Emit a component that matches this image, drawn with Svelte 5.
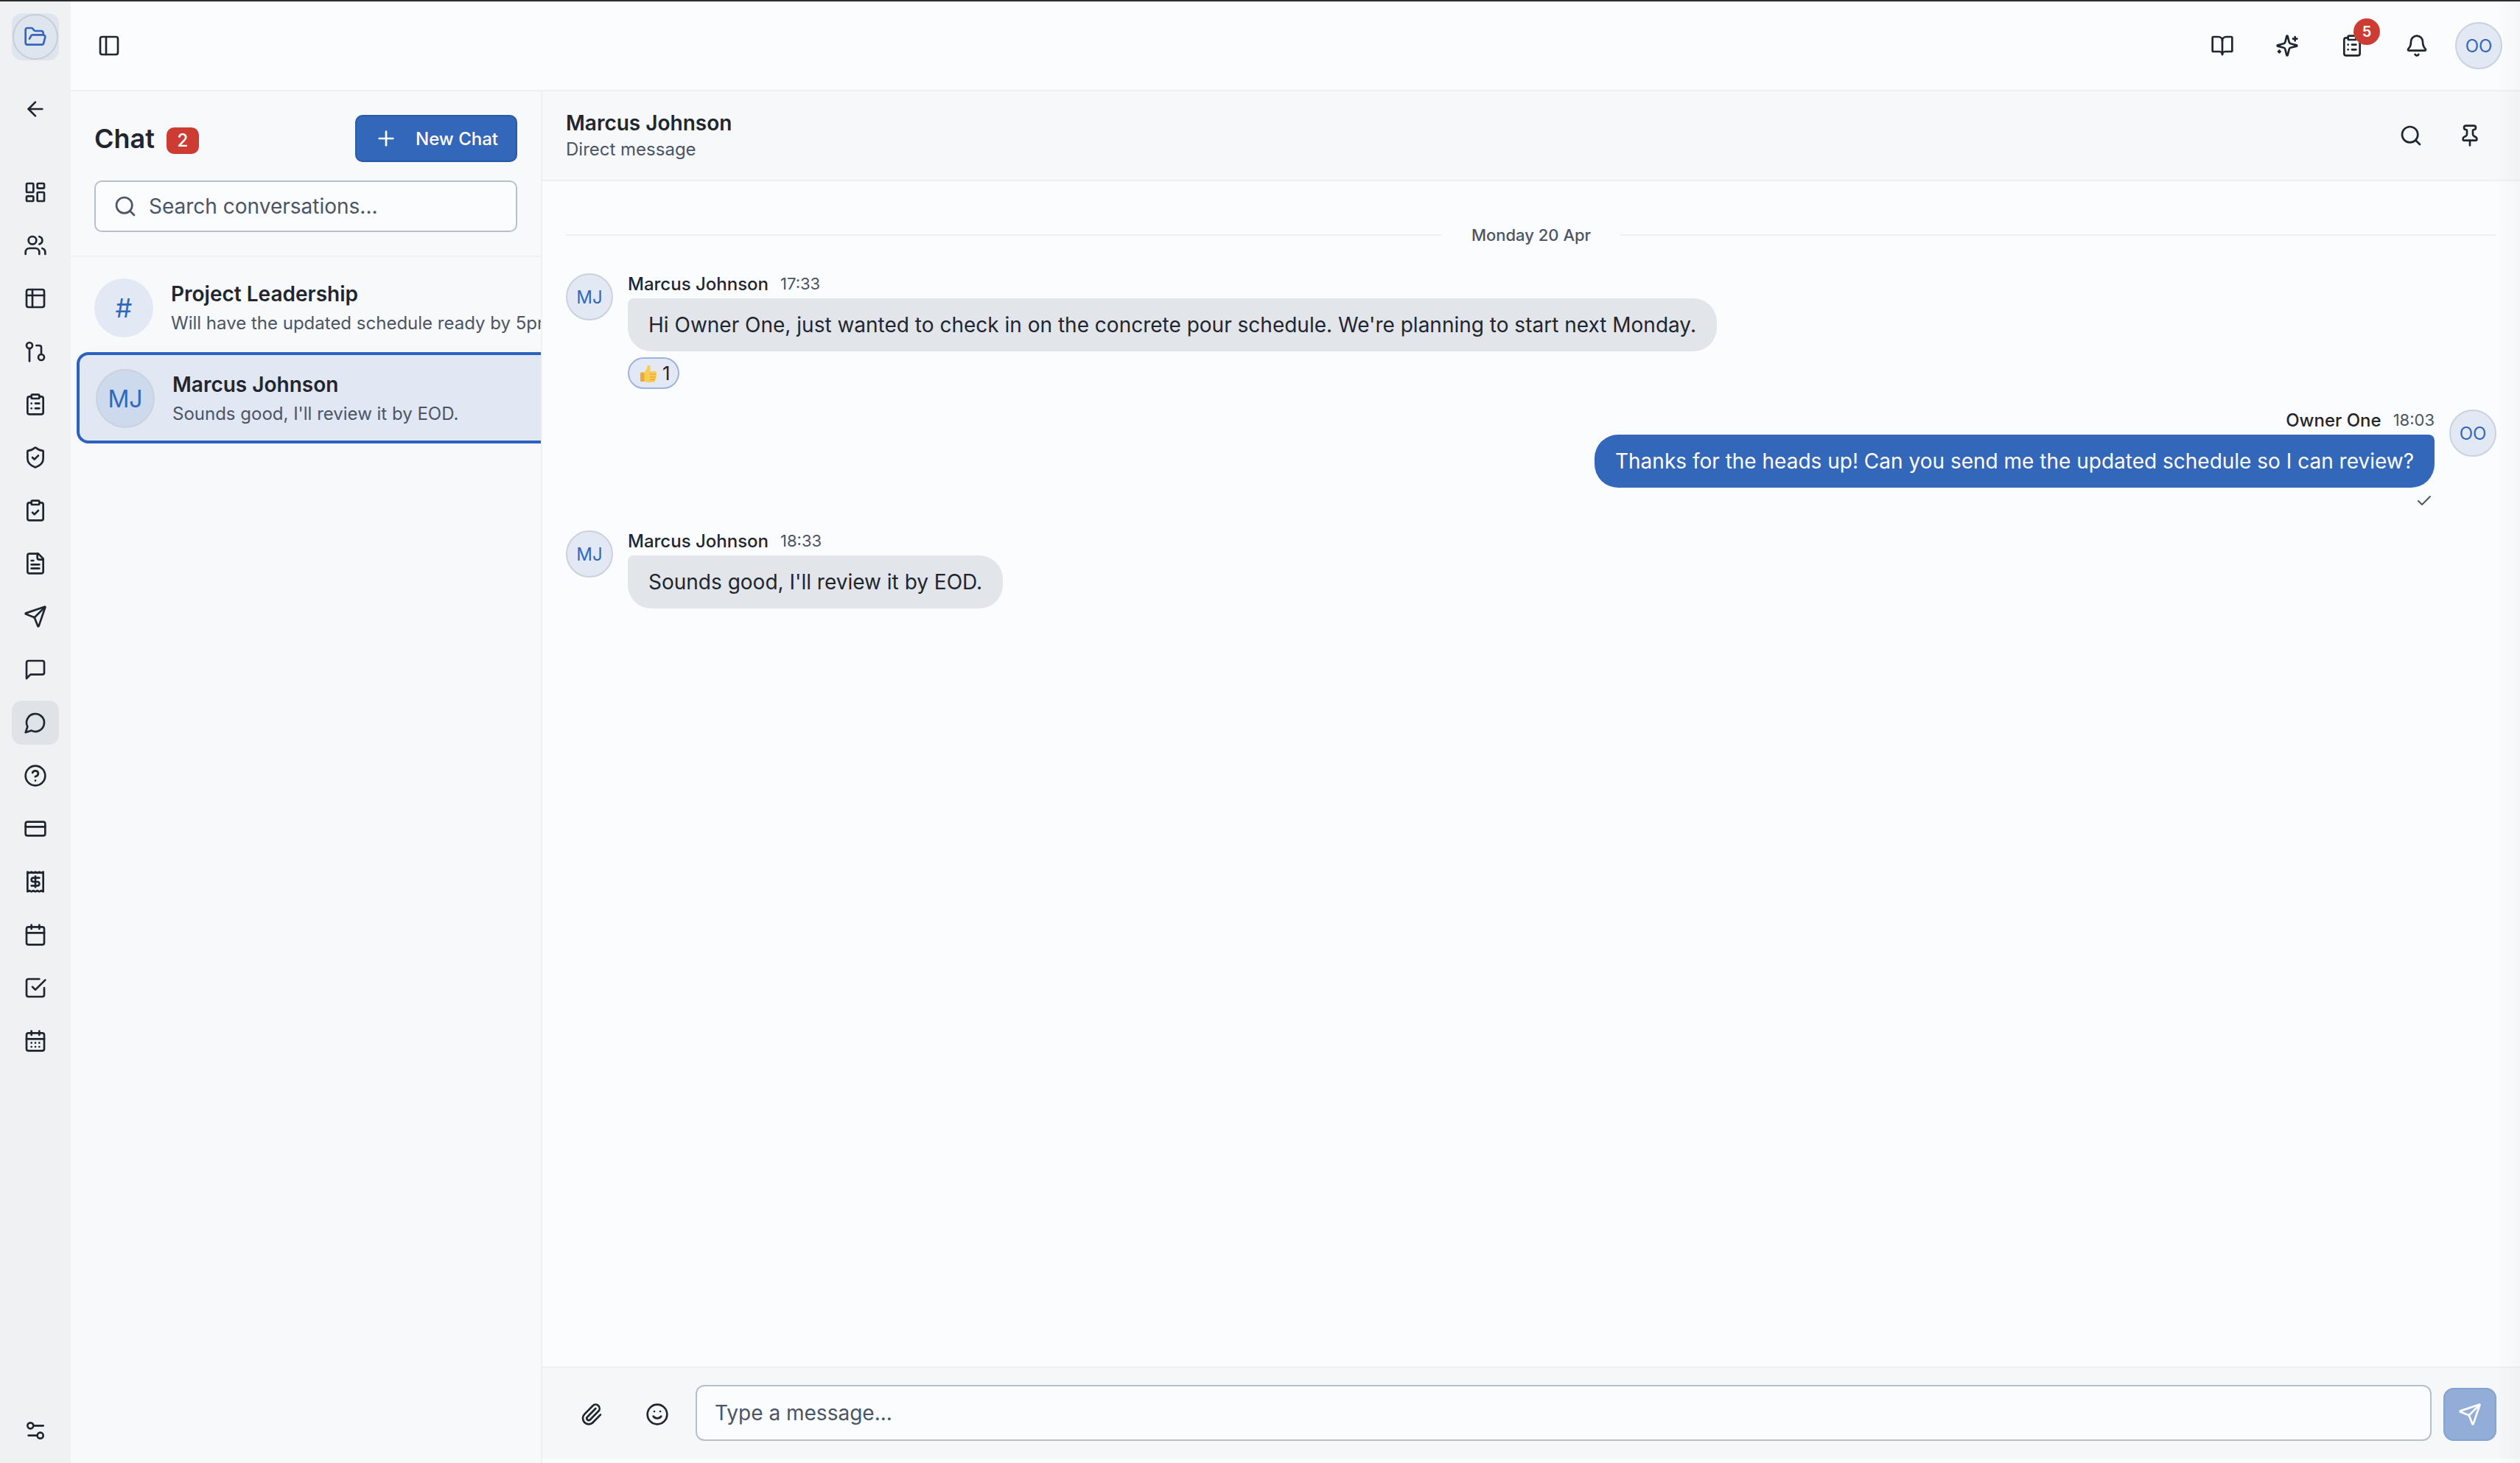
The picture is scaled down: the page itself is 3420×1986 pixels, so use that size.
<script>
  // Icon bodies are lucide-style path lists on a 24 box
  const I = {
    folder: ['m6 14 1.5-2.9A2 2 0 0 1 9.24 10H20a2 2 0 0 1 1.94 2.5l-1.54 6a2 2 0 0 1-1.95 1.5H4a2 2 0 0 1-2-2V5a2 2 0 0 1 2-2h3.9a2 2 0 0 1 1.69.9l.81 1.2a2 2 0 0 0 1.67.9H18a2 2 0 0 1 2 2v2'],
    panel: ['M5 3h14a2 2 0 0 1 2 2v14a2 2 0 0 1-2 2H5a2 2 0 0 1-2-2V5a2 2 0 0 1 2-2z', 'M9 3v18'],
    back: ['m12 19-7-7 7-7', 'M19 12H5'],
    dash: ['M4 3h5a1 1 0 0 1 1 1v7a1 1 0 0 1-1 1H4a1 1 0 0 1-1-1V4a1 1 0 0 1 1-1z', 'M15 3h5a1 1 0 0 1 1 1v3a1 1 0 0 1-1 1h-5a1 1 0 0 1-1-1V4a1 1 0 0 1 1-1z', 'M15 12h5a1 1 0 0 1 1 1v7a1 1 0 0 1-1 1h-5a1 1 0 0 1-1-1v-7a1 1 0 0 1 1-1z', 'M4 16h5a1 1 0 0 1 1 1v3a1 1 0 0 1-1 1H4a1 1 0 0 1-1-1v-3a1 1 0 0 1 1-1z'],
    users: ['M16 21v-2a4 4 0 0 0-4-4H6a4 4 0 0 0-4 4v2', 'M13 7a4 4 0 1 1-8 0 4 4 0 0 1 8 0z', 'M22 21v-2a4 4 0 0 0-3-3.87', 'M16 3.13a4 4 0 0 1 0 7.75'],
    table: ['M5 3h14a2 2 0 0 1 2 2v14a2 2 0 0 1-2 2H5a2 2 0 0 1-2-2V5a2 2 0 0 1 2-2z', 'M3 9h18', 'M9 3v18'],
    branch: ['M9 6a3 3 0 1 1-6 0 3 3 0 0 1 6 0z', 'M6 9v13', 'M21 18a3 3 0 1 1-6 0 3 3 0 0 1 6 0z', 'M13 6h3a2 2 0 0 1 2 2v7'],
    cliplist: ['M9 2h6a1 1 0 0 1 1 1v2a1 1 0 0 1-1 1H9a1 1 0 0 1-1-1V3a1 1 0 0 1 1-1z', 'M16 4h2a2 2 0 0 1 2 2v14a2 2 0 0 1-2 2H6a2 2 0 0 1-2-2V6a2 2 0 0 1 2-2h2', 'M12 11h4', 'M12 16h4', 'M8 11h.01', 'M8 16h.01'],
    shield: ['M20 13c0 5-3.5 7.5-7.66 8.95a1 1 0 0 1-.67-.01C7.5 20.5 4 18 4 13V6a1 1 0 0 1 1-1c2 0 4.5-1.2 6.24-2.72a1.17 1.17 0 0 1 1.52 0C14.51 3.81 17 5 19 5a1 1 0 0 1 1 1z', 'm9 12 2 2 4-4'],
    clipcheck: ['M9 2h6a1 1 0 0 1 1 1v2a1 1 0 0 1-1 1H9a1 1 0 0 1-1-1V3a1 1 0 0 1 1-1z', 'M16 4h2a2 2 0 0 1 2 2v14a2 2 0 0 1-2 2H6a2 2 0 0 1-2-2V6a2 2 0 0 1 2-2h2', 'm9 14 2 2 4-4'],
    file: ['M15 2H6a2 2 0 0 0-2 2v16a2 2 0 0 0 2 2h12a2 2 0 0 0 2-2V7Z', 'M14 2v4a2 2 0 0 0 2 2h4', 'M10 9H8', 'M16 13H8', 'M16 17H8'],
    send: ['M14.536 21.686a.5.5 0 0 0 .937-.024l6.5-19a.496.496 0 0 0-.635-.635l-19 6.5a.5.5 0 0 0-.024.937l7.93 3.18a2 2 0 0 1 1.112 1.11z', 'm21.854 2.147-10.94 10.939'],
    square: ['M21 15a2 2 0 0 1-2 2H7l-4 4V5a2 2 0 0 1 2-2h14a2 2 0 0 1 2 2z'],
    circle: ['M7.9 20A9 9 0 1 0 4 16.1L2 22Z'],
    help: ['M22 12a10 10 0 1 1-20 0 10 10 0 0 1 20 0z', 'M9.09 9a3 3 0 0 1 5.83 1c0 2-3 3-3 3', 'M12 17h.01'],
    card: ['M4 5h16a2 2 0 0 1 2 2v10a2 2 0 0 1-2 2H4a2 2 0 0 1-2-2V7a2 2 0 0 1 2-2z', 'M2 10h20'],
    receipt: ['M4 2v20l2-1 2 1 2-1 2 1 2-1 2 1 2-1 2 1V2l-2 1-2-1-2 1-2-1-2 1-2-1-2 1Z', 'M16 8h-6a2 2 0 1 0 0 4h4a2 2 0 1 1 0 4H8', 'M12 17.5v-11'],
    cal: ['M8 2v4', 'M16 2v4', 'M5 4h14a2 2 0 0 1 2 2v14a2 2 0 0 1-2 2H5a2 2 0 0 1-2-2V6a2 2 0 0 1 2-2z', 'M3 10h18'],
    task: ['m9 11 3 3L22 4', 'M21 12v7a2 2 0 0 1-2 2H5a2 2 0 0 1-2-2V5a2 2 0 0 1 2-2h11'],
    days: ['M8 2v4', 'M16 2v4', 'M5 4h14a2 2 0 0 1 2 2v14a2 2 0 0 1-2 2H5a2 2 0 0 1-2-2V6a2 2 0 0 1 2-2z', 'M3 10h18', 'M8 14h.01', 'M12 14h.01', 'M16 14h.01', 'M8 18h.01', 'M12 18h.01', 'M16 18h.01'],
    tune: ['M20 7h-9', 'M14 17H5', 'M20 17a3 3 0 1 1-6 0 3 3 0 0 1 6 0z', 'M10 7a3 3 0 1 1-6 0 3 3 0 0 1 6 0z'],
    book: ['M12 7v14', 'M3 18a1 1 0 0 1-1-1V4a1 1 0 0 1 1-1h5a4 4 0 0 1 4 4 4 4 0 0 1 4-4h5a1 1 0 0 1 1 1v13a1 1 0 0 1-1 1h-6a3 3 0 0 0-3 3 3 3 0 0 0-3-3z'],
    spark: ['M9.937 15.5A2 2 0 0 0 8.5 14.063l-6.135-1.582a.5.5 0 0 1 0-.962L8.5 9.936A2 2 0 0 0 9.937 8.5l1.582-6.135a.5.5 0 0 1 .963 0L14.063 8.5A2 2 0 0 0 15.5 9.937l6.135 1.581a.5.5 0 0 1 0 .964L15.5 14.063a2 2 0 0 0-1.437 1.437l-1.582 6.135a.5.5 0 0 1-.963 0z', 'M20 3v4', 'M22 5h-4', 'M4 17v2', 'M5 18H3'],
    bell: ['M10.268 21a2 2 0 0 0 3.464 0', 'M3.262 15.326A1 1 0 0 0 4 17h16a1 1 0 0 0 .74-1.673C19.41 13.956 18 12.499 18 8A6 6 0 0 0 6 8c0 4.499-1.411 5.956-2.738 7.326'],
    search: ['m21 21-4.34-4.34', 'M19 11a8 8 0 1 1-16 0 8 8 0 0 1 16 0z'],
    pin: ['M12 17v5', 'M9 10.76a2 2 0 0 1-1.11 1.79l-1.78.9A2 2 0 0 0 5 15.24V16a1 1 0 0 0 1 1h12a1 1 0 0 0 1-1v-.76a2 2 0 0 0-1.11-1.79l-1.78-.9A2 2 0 0 1 15 10.76V7a1 1 0 0 1 1-1 2 2 0 0 0 0-4H8a2 2 0 0 0 0 4 1 1 0 0 1 1 1z'],
    clip: ['M13.234 20.252 21 12.3', 'm16 6-8.414 8.586a2 2 0 0 0 0 2.828 2 2 0 0 0 2.828 0l8.414-8.586a4 4 0 0 0 0-5.656 4 4 0 0 0-5.656 0l-8.415 8.585a6 6 0 1 0 8.486 8.486'],
    smile: ['M22 12a10 10 0 1 1-20 0 10 10 0 0 1 20 0z', 'M8 14s1.5 2 4 2 4-2 4-2', 'M9 9h.01', 'M15 9h.01'],
    plus: ['M5 12h14', 'M12 5v14'],
    check: ['M20 6 9 17l-5-5'],
  }

  const nav = ['dash', 'users', 'table', 'branch', 'cliplist', 'shield', 'clipcheck', 'file', 'send', 'square', 'circle', 'help', 'card', 'receipt', 'cal', 'task', 'days']
</script>

{#snippet icon(name, size = 32)}
  <svg class="ic" width={size} height={size} viewBox="0 0 24 24" fill="none" stroke="currentColor" stroke-width="2" stroke-linecap="round" stroke-linejoin="round">
    {#each I[name] as d}<path {d} />{/each}
  </svg>
{/snippet}

<div class="app">
  <aside class="rail">
    <div class="rail-top">
      <button class="brand"><span class="ring">{@render icon('folder')}</span></button>
    </div>
    <button class="nav back">{@render icon('back')}</button>
    <nav class="nav-list">
      {#each nav as n}
        <button class="nav" class:on={n === 'circle'}>{@render icon(n)}</button>
      {/each}
    </nav>
    <button class="nav tune">{@render icon('tune')}</button>
  </aside>

  <div class="page">
    <header class="topbar">
      <button class="tb panel-btn">{@render icon('panel')}</button>
      <div class="tools">
        <button class="tb">{@render icon('book')}</button>
        <button class="tb">{@render icon('spark')}</button>
        <button class="tb">{@render icon('cliplist')}<span class="count">5</span></button>
        <button class="tb">{@render icon('bell')}</button>
        <span class="avatar top-av">OO</span>
      </div>
    </header>

    <div class="body">
      <section class="list">
        <div class="list-head">
          <div class="title-row">
            <h1>Chat <span class="unread">2</span></h1>
            <button class="new">{@render icon('plus')}<span>New Chat</span></button>
          </div>
          <div class="search">{@render icon('search')}<span>Search conversations...</span></div>
        </div>
        <div class="convs">
          <div class="conv">
            <span class="avatar big hash">#</span>
            <div class="conv-text">
              <div class="conv-name">Project Leadership</div>
              <div class="conv-last">Will have the updated schedule ready by 5pm today.</div>
            </div>
          </div>
          <div class="conv sel">
            <span class="avatar big">MJ</span>
            <div class="conv-text">
              <div class="conv-name">Marcus Johnson</div>
              <div class="conv-last">Sounds good, I'll review it by EOD.</div>
            </div>
          </div>
        </div>
      </section>

      <main class="chat">
        <div class="chat-head">
          <div>
            <div class="chat-name">Marcus Johnson</div>
            <div class="chat-sub">Direct message</div>
          </div>
          <div class="chat-tools">
            <button class="tb">{@render icon('search')}</button>
            <button class="tb">{@render icon('pin')}</button>
          </div>
        </div>

        <div class="msgs">
          <div class="date"><span>Monday 20 Apr</span></div>

          <div class="msg">
            <span class="avatar">MJ</span>
            <div class="col">
              <div class="meta"><b>Marcus Johnson</b><time>17:33</time></div>
              <div class="bubble">Hi Owner One, just wanted to check in on the concrete pour schedule. We're planning to start next Monday.</div>
              <div class="react">
                <!-- thumbs-up emoji, drawn since no emoji font is installed -->
                <svg width="24" height="26" viewBox="0 0 24 26">
                  <path d="M6 12 C8 9 10 7 10.500 3 C10.700 .8 14 .8 14.500 3.500 C15 6 14.500 8 14 10 L21 10 C23.500 10 23.500 13 22.500 14 C23.500 15 23.500 17 22 18 C23 19.500 22.500 21 21 21.500 C21.500 23.500 20.500 25 18.500 25 L10 25 C8 25 7 24 6 23.500 Z" fill="#f8cc55" />
                  <rect x="1" y="11.500" width="5.500" height="12.500" rx="1.500" fill="#f0a92e" />
                  <path d="M14 14h8M14 18h8M14 21.500h7" stroke="#e09a2a" stroke-width="1" fill="none" />
                </svg>
                <span>1</span>
              </div>
            </div>
          </div>

          <div class="msg mine">
            <div class="col">
              <div class="meta"><b>Owner One</b><time>18:03</time></div>
              <div class="bubble">Thanks for the heads up! Can you send me the updated schedule so I can review?</div>
              <div class="read">{@render icon('check', 24)}</div>
            </div>
            <span class="avatar">OO</span>
          </div>

          <div class="msg">
            <span class="avatar">MJ</span>
            <div class="col">
              <div class="meta"><b>Marcus Johnson</b><time>18:33</time></div>
              <div class="bubble">Sounds good, I'll review it by EOD.</div>
            </div>
          </div>
        </div>

        <div class="composer">
          <button class="tb att">{@render icon('clip')}</button>
          <button class="tb att">{@render icon('smile')}</button>
          <div class="input">Type a message...</div>
          <button class="sendbtn">{@render icon('send')}</button>
        </div>
      </main>
    </div>
  </div>
  <div class="edge"></div>
</div>

<style>
  :global(body) { margin: 0; background: #fbfcfe; }
  button { border: 0; background: none; padding: 0; color: inherit; font: inherit; display: inline-flex; align-items: center; justify-content: center; }
  .ic { display: block; flex: none; }

  .app { position: relative; display: flex; width: 3420px; height: 1986px; box-sizing: border-box; border-top: 2px solid #2b2d31; overflow: hidden; font-family: Inter, "Noto Sans", sans-serif; color: #1f2630; }
  .edge { position: absolute; top: 0; right: 0; bottom: 0; width: 32px; background: linear-gradient(to right, rgba(0, 0, 0, 0), rgba(0, 0, 0, .025)); pointer-events: none; }

  .rail { width: 96px; flex: none; background: #f0f1f3; display: flex; flex-direction: column; align-items: center; }
  .rail-top { width: 100%; height: 97px; padding-top: 16px; box-sizing: border-box; border-bottom: 2px solid #eef0f2; display: flex; justify-content: center; }
  .brand { width: 64px; height: 64px; border-radius: 14px; background: #dfe5ef; color: #3367ba; }
  .ring { width: 62px; height: 62px; border-radius: 50%; border: 2px solid #c7ced9; box-sizing: border-box; display: flex; align-items: center; justify-content: center; }
  .nav { width: 64px; height: 56px; border-radius: 14px; }
  .back { margin-top: 21px; }
  .nav-list { display: flex; flex-direction: column; gap: 16px; margin-top: 57px; }
  .nav.on { background: #dfe2e7; height: 60px; margin: -2px 0; }
  .tune { margin-top: auto; margin-bottom: 16px; }

  .page { flex: 1; min-width: 0; display: flex; flex-direction: column; }
  .topbar { height: 122px; flex: none; display: flex; align-items: center; justify-content: space-between; box-sizing: border-box; background: #fbfcfe; border-bottom: 2px solid #eef0f2; padding: 0 24px 0 36px; }
  .tb { width: 48px; height: 48px; position: relative; }
  .panel-btn { width: 32px; }
  .tools { display: flex; align-items: center; gap: 40px; }
  .tools .tb { width: 48px; }
  .count { position: absolute; top: -13px; left: 26px; width: 36px; height: 36px; border-radius: 50%; background: #cd3c32; color: #fff; font-size: 20px; font-weight: 600; display: flex; align-items: center; justify-content: center; }
  .avatar { width: 64px; height: 64px; border-radius: 50%; box-sizing: border-box; border: 2px solid #ccd2dc; background: #e3e9f4; color: #3367ba; font-size: 24px; display: flex; align-items: center; justify-content: center; flex: none; }
  .top-av { margin-left: -12px; }

  .body { flex: 1; min-height: 0; display: flex; }
  .list { width: 640px; flex: none; box-sizing: border-box; background: #f8f9fb; border-right: 2px solid #eef0f2; display: flex; flex-direction: column; overflow: hidden; }
  .list-head { padding: 32px 32px 32px; border-bottom: 2px solid #eef0f2; }
  .title-row { display: flex; justify-content: space-between; align-items: center; height: 64px; margin-bottom: 25px; }
  h1 { margin: 0; font-size: 36px; font-weight: 600; line-height: 48px; display: flex; align-items: center; gap: 16px; color: #1f2630; }
  .unread { background: #cd3c32; color: #fff; font-size: 24px; font-weight: 500; width: 44px; height: 36px; border-radius: 10px; display: flex; align-items: center; justify-content: center; margin-top: 6px; }
  .new { width: 220px; height: 64px; box-sizing: border-box; background: #3367ba; border: 2px solid #2b5aa6; border-radius: 10px; color: #fff; font-size: 24px; font-weight: 500; gap: 24px; }
  .search { height: 70px; box-sizing: border-box; border: 2px solid #b5c0cf; border-radius: 10px; background: #fbfcfe; display: flex; align-items: center; gap: 16px; padding: 0 24px; color: #4b5565; font-size: 28px; }

  .convs { padding: 7px 0 0 8px; display: flex; flex-direction: column; }
  .conv { height: 122px; box-sizing: border-box; padding-left: 20px; padding-top: 2px; border: 4px solid transparent; border-right: 0; border-radius: 16px 0 0 16px; display: flex; align-items: center; gap: 24px; white-space: nowrap; }
  .conv.sel { height: 124px; background: #e1e7f3; border-color: #2b62c0; padding-left: 22px; }
  .big { width: 80px; height: 80px; font-size: 32px; }
  .hash { border: 0; font-size: 36px; }
  .sel .big { background: #cdd9ec; }
  .conv-text { min-width: 0; overflow: hidden; display: flex; flex-direction: column; gap: 6px; }
  .conv-name { font-size: 28px; font-weight: 600; line-height: 36px; }
  .conv-last { font-size: 24px; line-height: 32px; color: #4b5565; }

  .chat { flex: 1; min-width: 0; display: flex; flex-direction: column; background: #fbfcfe; }
  .chat-head { height: 122px; flex: none; box-sizing: border-box; padding: 0 44px 0 32px; background: #f7f8fa; border-bottom: 2px solid #eef0f2; display: flex; align-items: center; justify-content: space-between; }
  .chat-name { font-size: 28px; font-weight: 600; line-height: 36px; }
  .chat-sub { font-size: 24px; line-height: 32px; margin-top: 2px; color: #4b5565; }
  .chat-tools { display: flex; gap: 32px; }

  .msgs { flex: 1; min-height: 0; padding: 0 32px; }
  .date { display: flex; align-items: center; gap: 40px; height: 32px; margin: 57px 0 36px; font-size: 22px; font-weight: 500; color: #4b5565; }
  .date::before, .date::after { content: ''; flex: 1; height: 2px; background: #eef0f2; }

  .msg { display: flex; gap: 20px; margin-bottom: 28px; align-items: flex-start; }
  .msg.mine { justify-content: flex-end; }
  .col { display: flex; flex-direction: column; align-items: flex-start; }
  .mine .col { align-items: flex-end; }
  .meta { height: 28px; margin-bottom: 6px; display: flex; align-items: center; gap: 16px; font-size: 24px; }
  .meta b { font-weight: 500; }
  .meta time { color: #4b5565; font-size: 22px; }
  .bubble { height: 72px; box-sizing: border-box; padding: 0 28px; display: flex; align-items: center; font-size: 28px; background: #e2e5e9; border-radius: 8px 32px 32px 32px; white-space: nowrap; }
  .mine .bubble { background: #3367ba; color: #fff; border-radius: 32px 8px 32px 32px; }
  .react { margin-top: 8px; height: 43px; width: 70px; box-sizing: border-box; padding: 0 0 0 14px; border: 2px solid #9db5dd; background: #e3e9f4; border-radius: 22px; display: flex; align-items: center; gap: 7px; font-size: 26px; }
  .read { margin-top: 6px; color: #4b5565; padding-right: 2px; }

  .composer { height: 125px; flex: none; margin-bottom: 6px; box-sizing: border-box; background: #f6f7f9; border-top: 2px solid #eef0f2; display: flex; align-items: flex-end; padding: 0 32px 24px 35px; }
  .att { width: 64px; height: 64px; margin-bottom: 4px; margin-right: 25px; }
  .att + .att { margin-right: 20px; }
  .input { flex: 1; height: 76px; box-sizing: border-box; border: 2px solid #b5c0cf; border-radius: 12px; background: #fbfcfe; padding: 0 24px; display: flex; align-items: center; font-size: 28px; color: #4b5565; }
  .sendbtn { width: 72px; height: 72px; box-sizing: border-box; border: 2px solid #87a3cf; border-radius: 14px; background: #92aed8; color: #fff; margin-left: 16px; }
</style>
